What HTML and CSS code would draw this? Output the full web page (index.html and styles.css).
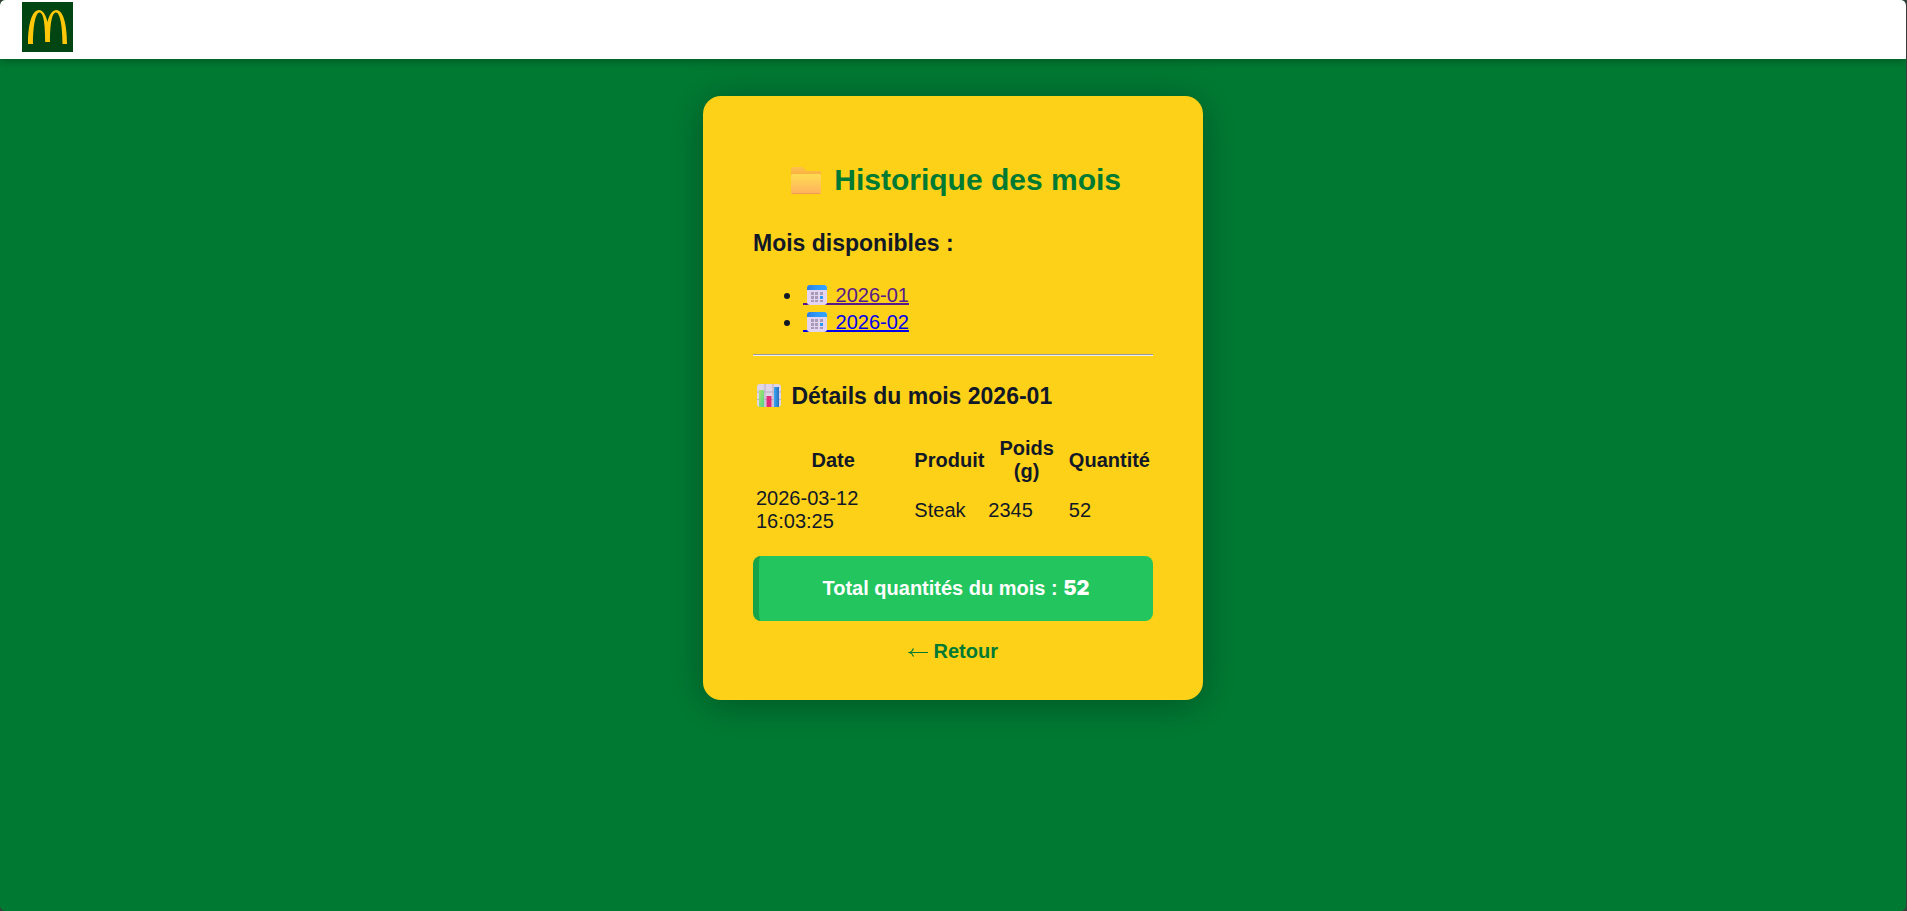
FILE: index.html
```
<!DOCTYPE html>
<html lang="fr">
<head>
  <meta charset="UTF-8" />
  <title>Historique des mois</title>
  <meta name="viewport" content="width=device-width, initial-scale=1.0" />
  <link rel="stylesheet" href="styles.css">
</head>
<body>

  <!-- Shared icons -->
  <svg class="defs" width="0" height="0" aria-hidden="true">
    <defs>
      <linearGradient id="folderBack" x1="0" y1="0" x2="0" y2="1">
        <stop offset="0" stop-color="#fdc04e" />
        <stop offset="1" stop-color="#f9ac3c" />
      </linearGradient>
      <linearGradient id="folderFront" x1="0" y1="0" x2="0" y2="1">
        <stop offset="0" stop-color="#ffdc52" />
        <stop offset="1" stop-color="#ffb25e" />
      </linearGradient>
      <linearGradient id="calTop" x1="0" y1="0" x2="1" y2="0">
        <stop offset="0" stop-color="#2a7de0" />
        <stop offset="0.500" stop-color="#2f9af8" />
        <stop offset="1" stop-color="#35a5ff" />
      </linearGradient>
      <linearGradient id="barBlue" x1="0" y1="0" x2="1" y2="0">
        <stop offset="0" stop-color="#3aa6f5" />
        <stop offset="1" stop-color="#2670bd" />
      </linearGradient>
      <linearGradient id="barGreen" x1="0" y1="0" x2="1" y2="1">
        <stop offset="0" stop-color="#b5e36a" />
        <stop offset="1" stop-color="#4fd488" />
      </linearGradient>
    </defs>
    <symbol id="calendar" viewBox="0 0 27 23">
      <rect x="0" y="19" width="27" height="2" fill="currentColor" />
      <rect x="4" y="1" width="20" height="20" rx="3" fill="#e3d5f2" />
      <path d="M4 6V4a3 3 0 0 1 3-3h14a3 3 0 0 1 3 3v2z" fill="url(#calTop)" />
      <g fill="#a79bb6">
        <rect x="8" y="8" width="3" height="3" /><rect x="12" y="8" width="3" height="3" /><rect x="17" y="8" width="3" height="3" />
        <rect x="8" y="12" width="3" height="3" /><rect x="12" y="12" width="3" height="3" />
        <rect x="8" y="16" width="3" height="2" /><rect x="12" y="16" width="3" height="2" /><rect x="17" y="16" width="3" height="2" />
      </g>
      <rect x="17" y="12" width="3" height="3" fill="#2f9af5" />
    </symbol>
  </svg>

  <header>
    <svg class="logo" viewBox="0 0 51 50" role="img" aria-label="Logo">
      <rect width="51" height="50" fill="#014512" />
      <path d="M6 42C6 22 10 8 17 8c4 0 7 5 8.500 12C27 13 30 8 34.500 8C41 8 45 22 45 42H40.500C40.500 24 38 10.500 34 10.500C30.500 10.500 28 19 28 40H23.200C23.200 19 21 10.500 17.500 10.500C13.500 10.500 11 24 11 42Z" fill="#ffc709" />
    </svg>
  </header>

  <main class="card">
    <h2>
      <svg class="icon-folder" viewBox="0 0 41 30" aria-hidden="true">
        <path d="M6 3.500Q6 2 7.500 2H17.500L21.500 6H36V12H6z" fill="url(#folderBack)" />
        <rect x="6" y="9" width="30" height="20" rx="1.500" fill="url(#folderFront)" />
        <path d="M7 28.500H35" stroke="#f79a55" />
      </svg>
      Historique des mois
    </h2>

    <h3>Mois disponibles :</h3>
    <ul class="months">
      <li><a class="visited" href="#2026-01"><svg class="icon-calendar" aria-hidden="true"><use href="#calendar" /></svg> 2026-01</a></li>
      <li><a href="#2026-02"><svg class="icon-calendar" aria-hidden="true"><use href="#calendar" /></svg> 2026-02</a></li>
    </ul>

    <hr>

    <h3>
      <svg class="icon-chart" viewBox="0 0 32 24" aria-hidden="true">
        <rect x="4" y="0" width="24" height="23" rx="3" fill="#dfd5e6" />
        <path d="M4 8H28M4 15.500H28M12 0V23M20 0V23" stroke="#b9aec2" />
        <rect x="6" y="6" width="5" height="17" fill="url(#barGreen)" />
        <rect x="13.500" y="12" width="5" height="11" fill="#e02d78" />
        <rect x="21" y="3" width="5" height="20" fill="url(#barBlue)" />
      </svg>
      Détails du mois 2026-01
    </h3>

    <table>
      <thead>
        <tr>
          <th>Date</th>
          <th>Produit</th>
          <th>Poids (g)</th>
          <th>Quantité</th>
        </tr>
      </thead>
      <tbody>
        <tr>
          <td>2026-03-12 16:03:25</td>
          <td>Steak</td>
          <td>2345</td>
          <td>52</td>
        </tr>
      </tbody>
    </table>

    <div class="total">Total quantités du mois : <strong>52</strong></div>

    <a class="back" href="#">
      <svg class="icon-arrow" viewBox="0 0 20 12" aria-hidden="true">
        <path d="M1.500 6.500H20M5.500 2.500Q4.500 5.500 1.500 6.500Q4.500 7.500 5.500 10.500" fill="none" stroke="currentColor" stroke-width="1.200" />
      </svg>
      Retour
    </a>
  </main>

</body>
</html>
```
FILE: styles.css
```
* {
  box-sizing: border-box;
}

html {
  height: 100%;
  background: #3b3b3b;
}

body {
  min-height: 100%;
  margin: 0 1px 0 0;
  font-family: "Liberation Sans", Arial, sans-serif;
  font-size: 20px;
  line-height: 23px;
  color: #111827;
  background: #007a33;
  border-radius: 5px;
}

.defs {
  position: absolute;
}

header {
  display: flex;
  height: 59px;
  padding: 2px 22px;
  background: #fff;
  border-radius: 5px 5px 0 0;
  box-shadow: 0 2px 10px rgba(0, 0, 0, 0.3);
}

.logo {
  width: 51px;
  height: 50px;
}

.card {
  width: 100%;
  max-width: 500px;
  margin: 37px auto 0;
  padding: 37px 50px;
  background: #fdd118;
  border-radius: 18px;
  box-shadow: 0 5px 38px rgba(0, 0, 0, 0.3);
  display: flow-root;
}

h2 {
  margin: 27px 0 29px;
  font-size: 30px;
  line-height: 40px;
  text-align: center;
  color: #007a33;
}

h3 {
  margin: 24px 0;
  font-size: 23px;
  line-height: 28px;
}

.icon-folder {
  width: 41px;
  height: 30px;
  vertical-align: -5px;
}

.icon-chart {
  width: 32px;
  height: 24px;
  vertical-align: -4px;
}

.icon-calendar {
  width: 27px;
  height: 23px;
  vertical-align: -5px;
}

.icon-arrow {
  width: 20px;
  height: 12px;
}

.months {
  margin: 25px 0 18px;
  padding-left: 50px;
  line-height: 27px;
}

.months a {
  color: #0000ee;
  text-underline-offset: 1px;
  text-decoration-thickness: 2px;
  text-decoration-skip-ink: none;
}

.months a.visited {
  color: #551a8b;
}

hr {
  margin: 18px 0 26px;
  border: 0;
  border-top: 1px solid #9a9a9a;
  border-bottom: 1px solid #eeeeee;
}

table {
  width: 100%;
  border-spacing: 2px;
}

th,
td {
  padding: 1px;
}

td {
  text-align: left;
}

.total {
  margin: 20px 0 19px;
  padding: 21px;
  text-align: center;
  font-weight: bold;
  color: #fff;
  background: #22c55e;
  border-left: 6px solid #16a34a;
  border-radius: 8px;
}

.total strong {
  font-family: Inter, "Liberation Sans", sans-serif;
  font-weight: 900;
}

.back {
  display: block;
  text-align: center;
  font-weight: bold;
  color: #007a33;
  text-decoration: none;
}
```
